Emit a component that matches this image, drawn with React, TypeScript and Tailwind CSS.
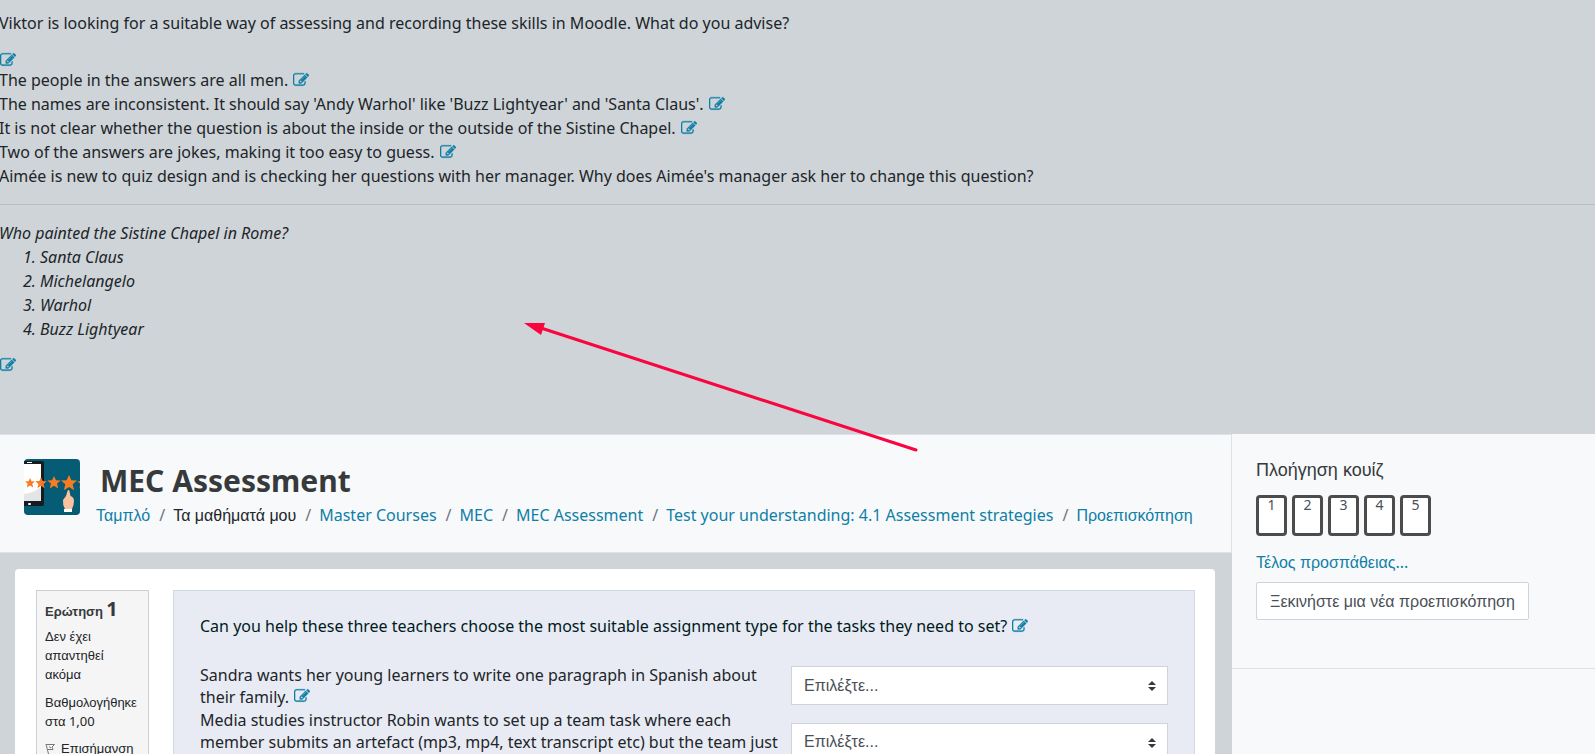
import type { FC, ReactNode } from 'react';

const EditLink: FC = () => (
  <a href="#edit" aria-label="Edit" className="ml-px inline-block align-middle text-[#0f7fa6]">
    <svg viewBox="0 0 1792 1792" className="-mt-1 size-4" fill="currentColor" stroke="currentColor" strokeWidth="30" aria-hidden="true">
      <path d="M888 1184l116-116-152-152-116 116v56h96v96h56zm440-720q-16-16-33 1l-350 350q-17 17-1 33t33-1l350-350q17-17 1-33zm80 594v190q0 119-84.5 203.5t-203.5 84.5h-832q-119 0-203.5-84.5t-84.5-203.5v-832q0-119 84.5-203.5t203.5-84.5h832q63 0 117 25 15 7 18 23 3 17-9 29l-49 49q-14 14-32 8-23-6-45-6h-832q-66 0-113 47t-47 113v832q0 66 47 113t113 47h832q66 0 113-47t47-113v-126q0-13 9-22l64-64q15-15 35-7t20 29zm-96-738l288 288-672 672h-288v-288zm444 132l-92 92-288-288 92-92q28-28 68-28t68 28l152 152q28 28 28 68t-28 68z" />
    </svg>
  </a>
);

const feedback = [
  'The people in the answers are all men.',
  "The names are inconsistent. It should say 'Andy Warhol' like 'Buzz Lightyear' and 'Santa Claus'.",
  'It is not clear whether the question is about the inside or the outside of the Sistine Chapel.',
  'Two of the answers are jokes, making it too easy to guess.',
];

const painters = ['Santa Claus', 'Michelangelo', 'Warhol', 'Buzz Lightyear'];

// Greek runs are set in Liberation Sans, everything else in Noto Sans
const Greek: FC<{ children: ReactNode }> = ({ children }) => (
  <span className="font-['Liberation_Sans',sans-serif]">{children}</span>
);

const crumbs = [
  { label: 'Ταμπλό', link: true, greek: true },
  { label: 'Τα μαθήματά μου', link: false, greek: true },
  { label: 'Master Courses', link: true },
  { label: 'MEC', link: true },
  { label: 'MEC Assessment', link: true },
  { label: 'Test your understanding: 4.1 Assessment strategies', link: true },
  { label: 'Προεπισκόπηση', link: true, greek: true },
];

const STAR = 'M0 -10L3 -3.4L10 -3L4.6 1.6L6.4 9L0 5L-6.4 9L-4.6 1.6L-10 -3L-3 -3.4Z';

const CourseLogo: FC = () => (
  <svg viewBox="0 0 56 56" className="size-14 shrink-0 rounded" aria-hidden="true">
    <rect width="56" height="56" fill="#065b75" />
    <path d="M0 2H18Q20 2 20 4V45Q20 47 18 47H0Z" fill="#151b1e" />
    <path d="M0 5H17V42H0Z" fill="#fff" />
    <path d="M0 35Q9 34 17 28V42H0Z" fill="#e3e5e6" />
    <path d="M3 3.500H8" stroke="#fff" strokeWidth="1" />
    <rect x="4" y="44" width="3" height="2" rx="1" fill="#fff" />
    <g fill="#f97b22">
      <path d={STAR} transform="translate(6 24) scale(.5)" />
      <path d={STAR} transform="translate(17 24) scale(.57)" />
      <path d={STAR} transform="translate(30 23.500) scale(.66)" />
      <path d={STAR} transform="translate(45 24) scale(.8)" />
      <path d={STAR} transform="translate(59 24) scale(.57)" />
    </g>
    <path d="M43.500 32Q44.500 30 45.500 32L46.500 37Q50 38 50 42Q50 46 48 50H41Q38.500 46 39 41L42 37Z" fill="#fac3a0" />
    <rect x="40" y="50" width="8" height="3" fill="#fff" />
  </svg>
);

const PreviousText: FC = () => (
  <section className="-ml-px h-[434px] pt-[11px] leading-6">
    <p className="mb-[13px]">
      Viktor is looking for a suitable way of assessing and recording these skills in Moodle. What do you advise?
    </p>
    <div className="h-5"><EditLink /></div>
    {feedback.map((text) => (
      <p key={text}>{text} <EditLink /></p>
    ))}
    <p>
      Aimée is new to quiz design and is checking her questions with her manager. Why does Aimée's manager ask her to
      change this question?
    </p>
    <hr className="my-4 border-black/10" />
    <div className="italic">
      <p>Who painted the Sistine Chapel in Rome?</p>
      <ol className="mb-3 list-decimal pl-[41px]">
        {painters.map((name) => <li key={name}>{name}</li>)}
      </ol>
    </div>
    <EditLink />
  </section>
);

const PageHeader: FC = () => (
  <header className="flex border-y border-r border-[#dee2e6] bg-[#f8f9fb] p-6">
    <CourseLogo />
    <div className="ml-4">
      <h1 className="ml-1 mt-1 text-[30px] font-bold leading-9 text-[#373a3c]">MEC Assessment</h1>
      <nav aria-label="Breadcrumb">
        <ol className="flex flex-wrap pt-1">
          {crumbs.map((crumb, i) => {
            const label = crumb.greek ? <Greek>{crumb.label}</Greek> : crumb.label;
            return (
              <li key={crumb.label}>
                {i > 0 && <span className="pl-[9px] pr-2 text-[#6c757d]">/</span>}
                {crumb.link ? <a href="#crumb" className="text-[#0f7fa6]">{label}</a> : label}
              </li>
            );
          })}
        </ol>
      </nav>
    </div>
  </header>
);

const QuestionInfo: FC = () => (
  <aside className="w-[113px] shrink-0 self-start border border-[#cad0d7] bg-[#f5f5f5] p-2 text-[13px] leading-[19px]">
    <h2 className="mb-[5px] font-bold leading-5 text-[#373a3c]">
      <Greek>Ερώτηση</Greek> <span className="text-xl leading-5">1</span>
    </h2>
    <p className="mb-[9px]"><Greek>Δεν έχει απαντηθεί ακόμα</Greek></p>
    <p className="mb-2"><Greek>Βαθμολογήθηκε</Greek> <Greek>στα</Greek> 1,00</p>
    <a href="#flag" className="flex gap-[6px]">
      <svg viewBox="0 0 10 12" className="mt-1 h-3 w-[10px] shrink-0" fill="none" stroke="#777" aria-hidden="true">
        <path d="M1 1L3.500 11M1 1.500H9.500L7 4L8 6.500H3M4 3.500L6 5" />
      </svg>
      <Greek>Επισήμανση ερώτησης</Greek>
    </a>
  </aside>
);

const AnswerRow: FC<{ id: string; children: ReactNode }> = ({ id, children }) => (
  <tr>
    <td className="pr-2 align-middle leading-[22px]">
      <label htmlFor={id} className="block">{children}</label>
    </td>
    <td className="w-[377px] py-1 align-middle">
      <div className="relative">
        <select
          id={id}
          className="block h-[39px] w-full appearance-none border border-[#ced4da] bg-white px-3 font-['Liberation_Sans',sans-serif] text-base text-[#495057]"
        >
          <option>Επιλέξτε...</option>
        </select>
        <svg viewBox="0 0 8 10" className="pointer-events-none absolute right-3 top-[15px] h-[10px] w-2" fill="#343a40" aria-hidden="true">
          <path d="M0 4L4 0L8 4ZM0 6L4 10L8 6Z" />
        </svg>
      </div>
    </td>
  </tr>
);

const Question: FC = () => (
  <section className="flex-1 border border-[#ced9e3] bg-[#e8ebf3] px-[26px] pt-[23px]">
    <p className="mb-6 leading-6 text-[#001a1e]">
      Can you help these three teachers choose the most suitable assignment type for the tasks they need to set?{' '}
      <EditLink />
    </p>
    <table className="w-full">
      <tbody>
        <AnswerRow id="answer1">
          Sandra wants her young learners to write one paragraph in Spanish about their family. <EditLink />
        </AnswerRow>
        <AnswerRow id="answer2">
          Media studies instructor Robin wants to set up a team task where each member submits an artefact (mp3, mp4,
          text transcript etc) but the team just
          <br />
          <EditLink />
        </AnswerRow>
      </tbody>
    </table>
  </section>
);

const QuizNavigation: FC = () => (
  <aside className="w-[363px] shrink-0 bg-[#f8f9fb]">
    <div className="border-b border-[#dee2e6] px-6 pb-12 pt-6">
      <h2 className="mb-[14px] text-lg leading-[22px] text-[#373a3c]"><Greek>Πλοήγηση κουίζ</Greek></h2>
      <div className="flex gap-[5px]">
        {[1, 2, 3, 4, 5].map((n) => (
          <a
            key={n}
            href="#question"
            className="h-[41px] w-[31px] rounded border-3 border-[#4c4c4c] bg-white text-center text-sm leading-[14px] text-[#495057]"
          >
            {n}
          </a>
        ))}
      </div>
      <a href="#finish" className="mt-[14px] block leading-6 text-[#0f7fa6]"><Greek>Τέλος προσπάθειας</Greek>...</a>
      <button type="button" className="mt-[7px] h-[38px] rounded-xs border border-[#ced4da] bg-white px-[13px] text-[#495057]">
        <Greek>Ξεκινήστε μια νέα προεπισκόπηση</Greek>
      </button>
    </div>
  </aside>
);

const Arrow: FC = () => (
  <svg viewBox="0 0 396 130" className="pointer-events-none absolute left-[523px] top-[322px] h-[130px] w-[396px]" aria-hidden="true">
    <path d="M18 6L393 128" stroke="#f9053f" strokeWidth="3" strokeLinecap="round" />
    <path d="M1 1L22 1L18 13Z" fill="#f9053f" />
  </svg>
);

function App() {
  return (
    <div className="relative h-screen overflow-hidden bg-[#ced4d8] font-['Noto_Sans',sans-serif] text-base text-[#212529]">
      <PreviousText />
      <div className="flex min-h-80">
        <main className="min-w-0 flex-1">
          <PageHeader />
          <div className="ml-[15px] mr-[17px] mt-4 flex h-full gap-6 rounded bg-white py-[21px] pl-[21px] pr-5">
            <QuestionInfo />
            <Question />
          </div>
        </main>
        <QuizNavigation />
      </div>
      <Arrow />
    </div>
  );
}

export default App;
